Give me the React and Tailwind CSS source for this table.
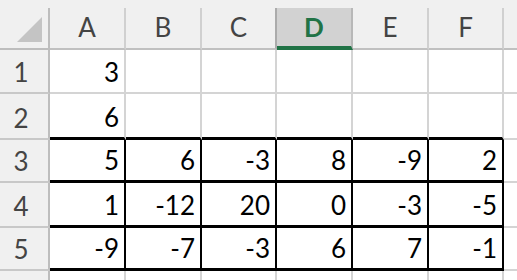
const cols = [
  { key: "A", w: "w-[76px]" },
  { key: "B", w: "w-[76px]" },
  { key: "C", w: "w-[75px]" },
  { key: "D", w: "w-[76px]" },
  { key: "E", w: "w-[76px]" },
  { key: "F", w: "w-[75px]" },
];

const rows = [
  { n: "1", h: "h-[44px]", vals: ["3", "", "", "", "", ""], boxed: false, closeTop: false },
  { n: "2", h: "h-[46px]", vals: ["6", "", "", "", "", ""], boxed: false, closeTop: true },
  { n: "3", h: "h-[43px]", vals: ["5", "6", "-3", "8", "-9", "2"], boxed: true },
  { n: "4", h: "h-[45px]", vals: ["1", "-12", "20", "0", "-3", "-5"], boxed: true },
  { n: "5", h: "h-[43px]", vals: ["-9", "-7", "-3", "6", "7", "-1"], boxed: true },
  // row 6 only peeks in at the bottom edge, its number is off screen
  { n: "", h: "h-[44px]", vals: ["", "", "", "", "", ""], boxed: false, closeTop: false },
];

const Cell = ({ col, value, row }) => {
  let border = "border-r-2 border-b-2 border-[#d4d4d4]";
  if (row.boxed) border = "border-r-2 border-b-[3px] border-black";
  else if (row.closeTop) border = "border-r-2 border-b-[3px] border-r-[#d4d4d4] border-b-black";
  return (
    <div className={`${col.w} h-full shrink-0 flex items-end justify-end pr-[5px] pb-[7px] ${border}`}>
      <span className="text-[26px] leading-none text-black">{value}</span>
    </div>
  );
};

const App = () => {
  return (
    <div className="w-[517px] h-[280px] overflow-hidden bg-white font-['Lato','Liberation_Sans',sans-serif]">
      <div className="flex items-end h-[50px] bg-[#f0f0f0]">
        <div className="w-[50px] h-[42px] shrink-0 flex items-end justify-end pr-[6px] pb-[6px] border-r-2 border-b-2 border-[#bdbdbd]">
          <svg width="25" height="25" viewBox="0 0 25 25">
            <polygon points="0,25 25,0 25,25" fill="#c4c4c4" />
          </svg>
        </div>
        {cols.map((c) =>
          c.key === "D" ? (
            <div
              key={c.key}
              className={`${c.w} h-[42px] shrink-0 flex items-end justify-center pb-[6px] bg-[#d2d2d2] border-r-2 border-r-[#b8b8b8] border-b-4 border-b-[#217346]`}
            >
              <span className="text-[26px] leading-none font-bold text-[#217346]">{c.key}</span>
            </div>
          ) : (
            <div
              key={c.key}
              className={`${c.w} h-[42px] shrink-0 flex items-end justify-center pb-[8px] border-r-2 border-b-2 border-b-[#c0c0c0] ${
                c.key === "C" ? "border-r-[#ababab]" : "border-r-[#d0d0d0]"
              }`}
            >
              <span className="text-[26px] leading-none text-[#444444]">{c.key}</span>
            </div>
          )
        )}
        <div className="flex-1 h-[42px] border-b-2 border-[#c0c0c0]" />
      </div>

      {rows.map((r, idx) => (
        <div key={idx} className={`flex ${r.h}`}>
          <div className="w-[50px] h-full shrink-0 flex items-end justify-center pr-[6px] pb-[7px] bg-[#f0f0f0] border-r-2 border-r-[#bdbdbd] border-b-2 border-b-[#c8c8c8]">
            <span className="text-[26px] leading-none text-[#444444]">{r.n}</span>
          </div>
          {cols.map((c, i) => (
            <Cell key={c.key} col={c} value={r.vals[i]} row={r} />
          ))}
          <div className="flex-1 h-full border-b-2 border-[#d4d4d4]" />
        </div>
      ))}
    </div>
  );
};

export default App;
